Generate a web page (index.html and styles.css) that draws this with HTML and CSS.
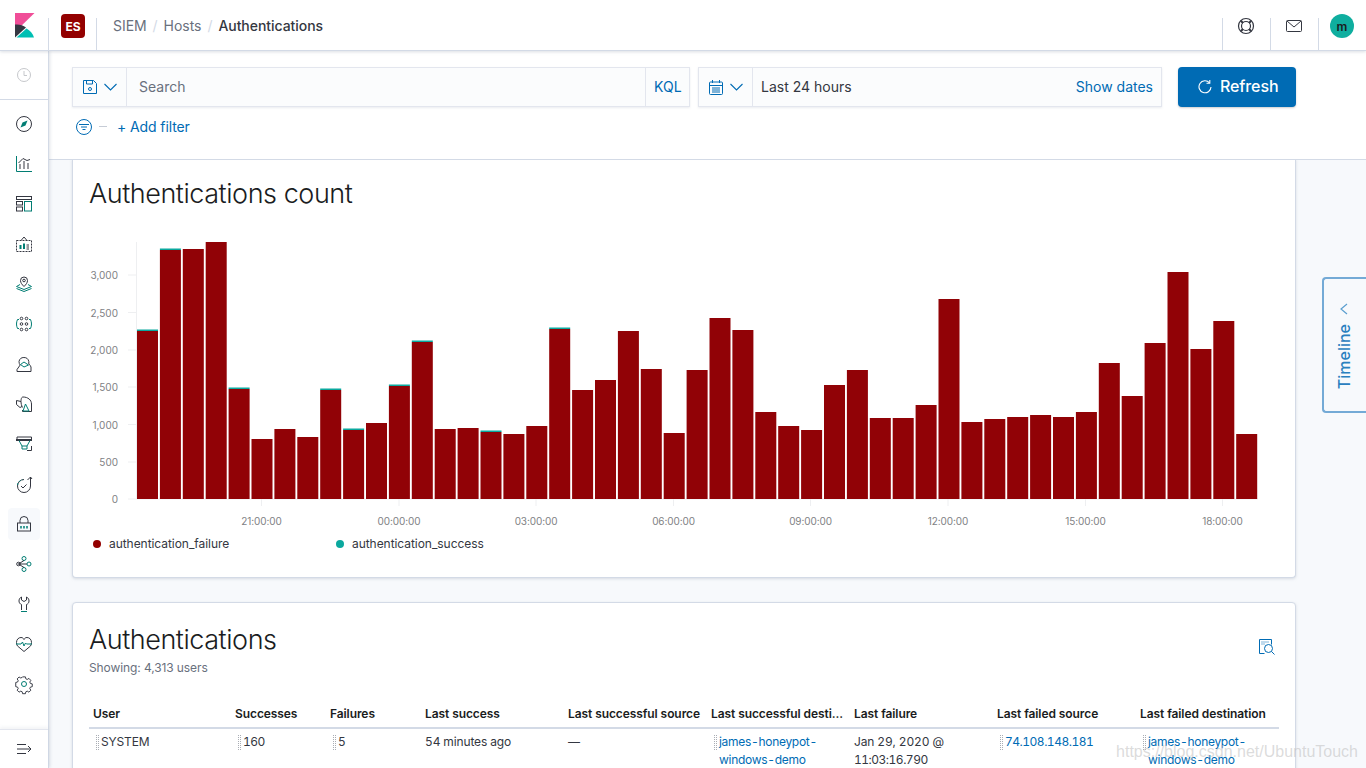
FILE: index.html
```html
<!DOCTYPE html>
<html lang="en">
<head>
<meta charset="utf-8">
<title>Authentications - SIEM</title>
<link rel="stylesheet" href="styles.css">
</head>
<body>
<header class="topbar">
  <div class="logo-cell">
    <svg class="logo" width="20" height="25" viewBox="0 0 20 25"><path fill="#f04e98" d="M0 0h19.500L0 19z"/><path fill="#343741" d="M0 11.500C4 11 8 12 11 14.500L0 24.500z"/><path fill="#00bfb3" d="M1.500 24.500L11.500 15.500C15 17.500 18 20.500 19 24.500z"/></svg>
  </div>
  <div class="space-cell"><span class="badge">ES</span></div>
  <nav class="crumbs">
    <span>SIEM</span><i>/</i><span>Hosts</span><i>/</i><b>Authentications</b>
  </nav>
  <div class="top-actions">
    <div class="top-cell">
      <svg width="18" height="18" viewBox="0 0 18 18" fill="none" stroke="#343741"><circle cx="9" cy="9" r="7.500" stroke-width="1.200"/><circle cx="9" cy="9" r="4.500" stroke-width="1.200"/><path stroke-width="2" d="M3.800 3.800l2.200 2.200M14.200 3.800L12 6M3.800 14.200L6 12M14.200 14.200L12 12"/></svg>
    </div>
    <div class="top-cell">
      <svg width="16" height="12" viewBox="0 0 16 12" fill="none" stroke="#343741" stroke-width="1"><rect x=".5" y=".5" width="15" height="11" rx="1"/><path d="M1 1l7 6 7-6"/></svg>
    </div>
    <div class="top-cell"><span class="avatar">m</span></div>
  </div>
</header>

<div class="shell">
  <aside class="sidenav">
    <div class="recent">
      <svg width="16" height="16" viewBox="0 0 16 16" fill="none" stroke="#c6c8cc"><circle cx="8" cy="8" r="6.500"/><path d="M8 4v4.500h3"/></svg>
    </div>
    <ul class="nav-list">
      <li class="nav-item"><svg class="ni" viewBox="0 0 16 16"><circle class="d" cx="8" cy="8" r="7.500"/><path class="tf" d="M11.500 4.500L9.500 9.500 4.500 11.500 6.500 6.500z"/></svg></li>
      <li class="nav-item"><svg class="ni" viewBox="0 0 16 16"><path class="t" d="M.5 0v15.500H16"/><path class="d" d="M4 8v5M8 5v8M12 7v6"/><path class="d" d="M2.500 7L7 2.500l4 2 3-1"/></svg></li>
      <li class="nav-item"><svg class="ni" viewBox="0 0 16 16"><rect class="d" x=".5" y=".5" width="15" height="3"/><rect class="d" x=".5" y="5.500" width="6" height="3.500"/><rect class="d" x=".5" y="11" width="6" height="4"/><rect class="t" x="8.500" y="5.500" width="7" height="9.500"/></svg></li>
      <li class="nav-item"><svg class="ni" viewBox="0 0 16 16"><path class="d" stroke-dasharray="2 1" d="M.5 4.500h15v11H.5z"/><path class="d" d="M5 4.500L8 1l3 3.500"/><path class="t" stroke-width="2" d="M4.500 9v4M8 7.500V13"/><path class="d" d="M10.500 9h2.500M10.500 11h2.500M10.500 13h2.500"/></svg></li>
      <li class="nav-item"><svg class="ni" viewBox="0 0 16 16"><path class="d" d="M8 10.500C6 8.500 4.500 6.800 4.500 4.500a3.500 3.500 0 0 1 7 0c0 2.300-1.500 4-3.500 6z"/><circle class="d" cx="8" cy="4.500" r="1.300"/><path class="t" d="M4 8.500L.5 10.500 8 13.500l7.500-3L12 8.500M.5 12.500L8 15.500l7.500-3"/></svg></li>
      <li class="nav-item"><svg class="ni" viewBox="0 0 16 16"><circle class="d" cx="5.500" cy="2.500" r="1.300"/><circle class="d" cx="10.500" cy="2.500" r="1.300"/><circle class="d" cx="5.500" cy="8" r="1.300"/><circle class="d" cx="10.500" cy="8" r="1.300"/><circle class="d" cx="5.500" cy="13.500" r="1.300"/><circle class="d" cx="10.500" cy="13.500" r="1.300"/><path class="t" d="M3 3.500H1.500C.8 5 .5 6.500.5 8s.3 3 1 4.500H3M13 3.500h1.500c.7 1.500 1 3 1 4.500s-.3 3-1 4.500H13"/></svg></li>
      <li class="nav-item"><svg class="ni" viewBox="0 0 16 16"><path class="d" d="M1 15.500h14V11a6.500 6.500 0 0 0-2.200-3V5.500a5 5 0 0 0-9.800 0c0 1.500.4 2.600 1.200 3.500L1 13.500z"/><path class="t" d="M4.500 8.500L8 6l4.500 3L8 11z"/></svg></li>
      <li class="nav-item"><svg class="ni" viewBox="0 0 16 16"><path class="d" d="M5 5.500L.5 4.500v4l3.500 3 2-1M15.500 15.500h-9V14M15.500 15.500V8C15.500 4 12 1 7 1 6 1 5 2 5 5.500c0 2 .5 4 1.500 6"/><path class="t" d="M9.500 8l3.500 7h-6z"/></svg></li>
      <li class="nav-item"><svg class="ni" viewBox="0 0 16 16"><path class="d" d="M1 4V1h14.500v3M11 14.500h4.500V10"/><rect class="d" x=".5" y="3.500" width="15" height="1"/><path class="t" d="M3 4.500L6 10h5l3-5.500M6 10v3h5v-3"/></svg></li>
      <li class="nav-item"><svg class="ni" viewBox="0 0 16 16"><path class="d" d="M8 3.500a6.500 6.500 0 1 0 6.500 6.500V1M11.500 4L14.500 1 16 3"/><path class="t" stroke-dasharray="2 1.500" d="M1.500 9a6.500 6.500 0 0 1 5-5.300"/><path class="d" d="M5 10l2 2 3.500-3.500"/></svg></li>
      <li class="nav-item selected"><svg class="ni" viewBox="0 0 16 16"><path class="d" d="M4 7V4.500a4 4 0 0 1 8 0V7"/><rect class="d" x="1.500" y="7" width="13" height="8"/><path class="t" stroke-width="1.500" d="M5 10v2.500M8 10v2.500M11 10v2.500"/></svg></li>
      <li class="nav-item"><svg class="ni" viewBox="0 0 16 16"><circle class="t" cx="8" cy="2.500" r="2"/><circle class="t" cx="13" cy="8" r="2"/><circle class="t" cx="8" cy="13.500" r="2"/><circle class="d" cx="2.500" cy="8" r="1.800"/><path class="d" d="M2.500 8h8.500M2.500 8L8 4.500M2.500 8L8 11.500"/></svg></li>
      <li class="nav-item"><svg class="ni" viewBox="0 0 16 16"><path class="d" d="M5.500 1C3.500 2 3 3.500 3 5c0 1.700 1 3 2.500 3.500V14M10.500 1c2 1 2.500 2.500 2.500 4 0 1.700-1 3-2.500 3.500V14M5.500 1v3L8 5.500 10.500 4V1"/><path class="t" d="M5 15.500h6"/></svg></li>
      <li class="nav-item"><svg class="ni" viewBox="0 0 16 16"><path class="d" d="M1.500 10C.8 9 .5 8 .5 6.500.5 3.500 2.500 1.500 5 1.500c1.500 0 2.300.7 3 2 .7-1.300 1.500-2 3-2 2.500 0 4.500 2 4.500 5 0 1.500-.3 2.500-1 3.500L8 15.500z"/><path class="t" d="M0 8h5l1.500-2 1.500 4 1.500-3 1 1H16"/></svg></li>
      <li class="nav-item"><svg class="ni" viewBox="0 0 16 16"><path class="d" d="M6.500.5h3l.4 2 1.500.7 1.800-1.100 2 2.100-1.100 1.700.6 1.500 2 .5v2.900l-2 .5-.6 1.500 1.100 1.700-2 2.100-1.800-1.100-1.500.7-.4 2h-3l-.4-2-1.500-.7-1.800 1.100-2-2.100 1.100-1.700-.6-1.500-2-.5V6.400l2-.5.6-1.500-1.100-1.700 2-2.100 1.800 1.100 1.500-.7z" transform="translate(.4 .4) scale(.95)"/><circle class="t" cx="8" cy="8" r="2.500"/></svg></li>
    </ul>
    <div class="nav-toggle">
      <svg width="16" height="12" viewBox="0 0 16 12" fill="none" stroke="#343741"><path d="M1 1.500h9M1 6h14M1 10.500h9M12 3l3 3-3 3"/></svg>
    </div>
  </aside>

  <main class="main">
    <section class="querybar">
      <div class="query-row">
        <div class="field search-field">
          <div class="prepend">
            <svg width="14" height="14" viewBox="0 0 14 14" fill="none" stroke="#006bb4"><path d="M.5.500h10l3 3v10H.5z"/><path d="M3.500.500v3.500h6V.500"/><circle cx="7" cy="9" r="1.500"/></svg>
            <svg class="chev" width="13" height="8" viewBox="0 0 13 8" fill="none" stroke="#006bb4" stroke-width="1.100"><path d="M.5 1l6 6 6-6"/></svg>
          </div>
          <span class="placeholder">Search</span>
          <a class="kql">KQL</a>
        </div>
        <div class="field date-field">
          <div class="prepend">
            <svg width="14" height="15" viewBox="0 0 14 15" fill="none" stroke="#006bb4"><rect x=".5" y="2" width="13" height="12.500" rx="1"/><path d="M.5 5.500h13M3.500 0v3M10.500 0v3M3 8h8M3 10h8M3 12h8" /></svg>
            <svg class="chev" width="13" height="8" viewBox="0 0 13 8" fill="none" stroke="#006bb4" stroke-width="1.100"><path d="M.5 1l6 6 6-6"/></svg>
          </div>
          <span class="range">Last 24 hours</span>
          <a class="show-dates">Show dates</a>
        </div>
        <button class="refresh">
          <svg width="14" height="14" viewBox="0 0 14 14" fill="none" stroke="#fff" stroke-width="1.100"><path d="M11.500 2.800A6 6 0 1 0 13 7"/><path d="M11.800 0v3.300H8.500"/></svg>
          <span class="refresh-label">Refresh</span>
        </button>
      </div>
      <div class="filter-row">
        <svg width="16" height="16" viewBox="0 0 16 16" fill="none" stroke="#006bb4"><circle cx="8" cy="8" r="7.500"/><path d="M3 5.500h10M5 8h6M6.500 10.500h3"/></svg>
        <span class="dash"></span>
        <a class="add-filter">+ Add filter</a>
      </div>
    </section>

    <div class="content">
      <section class="panel chart-panel">
        <h2 class="title">Authentications count</h2>
        <svg class="chart" viewBox="72 220 1224 310" width="1224" height="310">
          <g class="grid">
            <path d="M136.500 242V499M128 275h8M128 312.500h8M128 350h8M128 387h8M128 424.500h8M128 462h8M128 499h1130"/>
            <path d="M261.500 499v7M399 499v7M536 499v7M673.500 499v7M810.500 499v7M948 499v7M1085.500 499v7M1222.500 499v7"/>
          </g>
          <g class="fail">
            <rect x="137" y="331" width="21" height="168"/><rect x="159.900" y="250" width="21" height="249"/><rect x="182.800" y="249" width="21" height="250"/><rect x="205.700" y="242" width="21" height="257"/><rect x="228.600" y="389" width="21" height="110"/><rect x="251.500" y="439" width="21" height="60"/><rect x="274.400" y="429" width="21" height="70"/><rect x="297.300" y="437" width="21" height="62"/><rect x="320.200" y="390" width="21" height="109"/><rect x="343.100" y="430" width="21" height="69"/><rect x="366" y="423" width="21" height="76"/><rect x="388.900" y="386" width="21" height="113"/><rect x="411.800" y="342" width="21" height="157"/><rect x="434.700" y="429" width="21" height="70"/><rect x="457.600" y="428" width="21" height="71"/><rect x="480.500" y="432" width="21" height="67"/><rect x="503.400" y="434" width="21" height="65"/><rect x="526.300" y="426" width="21" height="73"/><rect x="549.200" y="329" width="21" height="170"/><rect x="572.100" y="390" width="21" height="109"/><rect x="595" y="380" width="21" height="119"/><rect x="617.900" y="331" width="21" height="168"/><rect x="640.800" y="369" width="21" height="130"/><rect x="663.700" y="433" width="21" height="66"/><rect x="686.600" y="370" width="21" height="129"/><rect x="709.500" y="318" width="21" height="181"/><rect x="732.400" y="330" width="21" height="169"/><rect x="755.300" y="412" width="21" height="87"/><rect x="778.200" y="426" width="21" height="73"/><rect x="801.100" y="430" width="21" height="69"/><rect x="824" y="385" width="21" height="114"/><rect x="846.900" y="370" width="21" height="129"/><rect x="869.800" y="418" width="21" height="81"/><rect x="892.700" y="418" width="21" height="81"/><rect x="915.600" y="405" width="21" height="94"/><rect x="938.500" y="299" width="21" height="200"/><rect x="961.400" y="422" width="21" height="77"/><rect x="984.300" y="419" width="21" height="80"/><rect x="1007.200" y="417" width="21" height="82"/><rect x="1030.100" y="415" width="21" height="84"/><rect x="1053" y="417" width="21" height="82"/><rect x="1075.900" y="412" width="21" height="87"/><rect x="1098.800" y="363" width="21" height="136"/><rect x="1121.700" y="396" width="21" height="103"/><rect x="1144.600" y="343" width="21" height="156"/><rect x="1167.500" y="272" width="21" height="227"/><rect x="1190.400" y="349" width="21" height="150"/><rect x="1213.300" y="321" width="21" height="178"/><rect x="1236.200" y="434" width="21" height="65"/>
          </g>
          <g class="succ">
            <rect x="137" y="329.500" width="21" height="1.500"/><rect x="159.900" y="248.500" width="21" height="1.500"/><rect x="228.600" y="387.500" width="21" height="1.500"/><rect x="320.200" y="388.500" width="21" height="1.500"/><rect x="343.100" y="428.500" width="21" height="1.500"/><rect x="388.900" y="384.500" width="21" height="1.500"/><rect x="411.800" y="340.500" width="21" height="1.500"/><rect x="480.500" y="430.500" width="21" height="1.500"/><rect x="549.200" y="327.500" width="21" height="1.500"/>
          </g>
          <g class="ylabels">
            <text x="118" y="279">3,000</text><text x="118" y="316.500">2,500</text><text x="118" y="354">2,000</text><text x="118" y="391">1,500</text><text x="118" y="428.500">1,000</text><text x="118" y="466">500</text><text x="118" y="503">0</text>
          </g>
          <g class="xlabels">
            <text x="261.500" y="525">21:00:00</text><text x="399" y="525">00:00:00</text><text x="536" y="525">03:00:00</text><text x="673.500" y="525">06:00:00</text><text x="810.500" y="525">09:00:00</text><text x="948" y="525">12:00:00</text><text x="1085.500" y="525">15:00:00</text><text x="1222.500" y="525">18:00:00</text>
          </g>
        </svg>
        <div class="legend">
          <div class="legend-item"><span class="dot dot-fail"></span>authentication_failure</div>
          <div class="legend-item"><span class="dot dot-succ"></span>authentication_success</div>
        </div>
      </section>

      <section class="panel table-panel">
        <div class="table-head">
          <div>
            <h2 class="title">Authentications</h2>
            <p class="subtitle">Showing: 4,313 users</p>
          </div>
          <svg class="inspect" width="16" height="16" viewBox="0 0 16 16" fill="none" stroke="#006bb4"><path d="M5.500 14.500H.5V.5h12v5"/><path stroke-dasharray="1 1" d="M2.500 3h8M2.500 5h4"/><circle cx="9.500" cy="9.500" r="4"/><path d="M12.500 12.500l3 3"/></svg>
        </div>
        <div class="table">
          <div class="thead">
            <span>User</span><span>Successes</span><span>Failures</span><span>Last success</span><span>Last successful source</span><span>Last successful desti...</span><span>Last failure</span><span>Last failed source</span><span>Last failed destination</span>
          </div>
          <div class="trow">
            <span class="cell grip-cell"><i class="grip"></i>SYSTEM</span>
            <span class="cell grip-cell num"><i class="grip"></i>160</span>
            <span class="cell grip-cell"><i class="grip"></i>5</span>
            <span class="cell">54 minutes ago</span>
            <span class="cell">—</span>
            <span class="cell grip-cell"><i class="grip"></i><a>james-honeypot-<br>windows-demo</a></span>
            <span class="cell">Jan 29, 2020 @<br><span class="num">11:03:16.790</span></span>
            <span class="cell grip-cell num"><i class="grip"></i><a>74.108.148.181</a></span>
            <span class="cell grip-cell"><i class="grip"></i><a>james-honeypot-<br>windows-demo</a></span>
          </div>
        </div>
      </section>
    </div>

    <button class="timeline">
      <svg width="8" height="12" viewBox="0 0 8 12" fill="none" stroke="#5b9fd0" stroke-width="1.200"><path d="M7 1L1 6l6 5"/></svg>
      <span>Timeline</span>
    </button>
    <div class="watermark">https://blog.csdn.net/UbuntuTouch</div>
  </main>
</div>
</body>
</html>
```
FILE: styles.css
```css
* { box-sizing: border-box; }
html, body { margin: 0; height: 100%; overflow: hidden; }
body { font-family: Inter, "Liberation Sans", sans-serif; font-size: 14px; color: #343741; background: #fff; }
a { color: #006bb4; }

.topbar { height: 51px; display: flex; align-items: stretch; background: #fff; border-bottom: 1px solid #d3dae6; box-shadow: 0 1px 3px rgba(152,162,179,.35); position: relative; z-index: 3; }
.logo-cell { width: 48px; display: flex; align-items: flex-start; padding: 13px 0 0 15px; }
.space-cell { width: 49px; margin-top: 18px; border-left: 1px solid #d3dae6; border-right: 1px solid #d3dae6; position: relative; }
.badge { position: absolute; left: 12px; top: -4px; width: 24px; height: 24px; border-radius: 4px; background: #930000; color: #fff; font-size: 12px; font-weight: 700; display: flex; align-items: center; justify-content: center; }
.crumbs { display: flex; align-items: center; padding-left: 16px; padding-top: 1px; flex: 1; color: #69707d; white-space: nowrap; letter-spacing: -.05px; }
.crumbs i { font-style: normal; color: #d3dae6; margin: 0 6px; }
.crumbs b { font-weight: 500; color: #343741; }
.top-actions { display: flex; }
.top-cell { width: 48px; margin-top: 18px; border-left: 1px solid #d3dae6; position: relative; }
.top-cell svg { position: absolute; left: calc(50% - 1px); top: 8px; transform: translate(-50%, -50%); }
.avatar { position: absolute; left: 11px; top: -4px; width: 24px; height: 24px; border-radius: 50%; background: #0fae9f; color: #1a1c21; font-size: 12px; font-weight: 600; display: flex; align-items: center; justify-content: center; }

.shell { display: flex; height: 717px; }
.sidenav { width: 49px; margin-right: -1px; flex: none; background: #fff; border-right: 1px solid #d3dae6; box-shadow: 1px 0 3px rgba(152,162,179,.3); display: flex; flex-direction: column; position: relative; z-index: 2; }
.recent { height: 49px; flex: none; display: flex; align-items: center; justify-content: center; border-bottom: 1px solid #d3dae6; padding-bottom: 1px; }
.nav-list { list-style: none; margin: 4px 0 0; padding: 0; display: flex; flex-direction: column; }
.nav-item { width: 48px; height: 40px; display: flex; align-items: center; justify-content: center; position: relative; }
.nav-item.selected::before { content: ""; position: absolute; inset: 4px 8px; background: #f7f9fc; border-radius: 4px; }
.ni { width: 16px; height: 16px; position: relative; fill: none; stroke-width: 1; overflow: visible; }
.ni .d { stroke: #343741; fill: none; }
.ni .t { stroke: #017d73; fill: none; }
.ni .tf { fill: #017d73; }
.nav-toggle { margin-top: auto; height: 39px; flex: none; border-top: 1px solid #e3e6ee; display: flex; align-items: center; justify-content: center; box-shadow: 0 -2px 3px rgba(152,162,179,.12); }

.main { flex: 1; min-width: 0; background: #f7f9fc; display: flex; flex-direction: column; position: relative; }
.querybar { height: 109px; flex: none; background: #fff; border-bottom: 1px solid #d3dae6; padding: 16px 70px 0 24px; }
.query-row { display: flex; gap: 8px; height: 40px; }
.field { display: flex; align-items: center; height: 40px; background: #fbfcfd; border: 1px solid #e3e6ee; box-shadow: 0 1px 2px rgba(152,162,179,.2); }
.search-field { width: 618px; flex: none; }
.date-field { width: 464px; flex: none; }
.prepend { width: 54px; height: 100%; flex: none; display: flex; align-items: center; gap: 7px; padding-left: 10px; border-right: 1px solid #e3e6ee; }
.placeholder { flex: 1; padding: 0 0 2px 12px; color: #69707d; }
.kql { height: 100%; width: 44px; flex: none; border-left: 1px solid #e3e6ee; display: flex; align-items: center; padding: 0 0 2px 8px; color: #006bb4; }
.range { flex: 1; padding: 0 0 2px 8px; }
.show-dates { padding: 0 8px 2px 0; color: #006bb4; }
.refresh { width: 118px; margin-left: 8px; height: 40px; flex: none; border: 0; border-radius: 4px; background: #006bb4; color: #fff; font: 500 16px Inter, "Liberation Sans", sans-serif; display: flex; align-items: center; gap: 8px; padding: 0 0 0 20px; box-shadow: 0 1px 2px rgba(52,55,65,.25); letter-spacing: -.1px; }
.refresh-label { padding-bottom: 2px; }
.filter-row { display: flex; align-items: center; height: 24px; margin-top: 8px; padding-left: 4px; }
.dash { width: 8px; height: 1px; background: #c6ccd6; margin: 0 10px 2px 7px; }
.add-filter { color: #006bb4; padding-bottom: 2px; letter-spacing: -.1px; }

.content { flex: 1; min-height: 0; overflow: hidden; padding: 0 70px 0 24px; display: flex; flex-direction: column; gap: 24px; }
.panel { background: #fff; border: 1px solid #d3dae6; border-radius: 4px; box-shadow: 0 1px 3px rgba(152,162,179,.35); padding: 0 16px; flex: none; }
.chart-panel { margin-top: -1px; border-top: 0; border-top-left-radius: 0; border-top-right-radius: 0; padding-top: 16px; height: 419px; }
.title { margin: 0; font-size: 27px; line-height: 38px; font-weight: 300; color: #1a1c21; letter-spacing: -.45px; }
.chart { display: block; margin: 7px 0 0 -17px; }
.grid path { stroke: #eeeff1; fill: none; }
.fail rect { fill: #910206; }
.succ rect { fill: #0aa89e; }
.ylabels text { font-size: 10px; fill: #808184; text-anchor: end; }
.xlabels text { font-size: 10px; fill: #808184; text-anchor: middle; letter-spacing: -.1px; }
.legend { display: flex; margin: 5px 0 0 4px; }
.legend-item { width: 243px; display: flex; align-items: center; gap: 8px; font-size: 12px; line-height: 18px; color: #343741; letter-spacing: -.05px; }
.dot { width: 8px; height: 8px; border-radius: 50%; }
.dot-fail { background: #930000; }
.dot-succ { background: #0aa89e; }

.table-panel { height: 300px; padding-top: 18px; }
.table-head { display: flex; justify-content: space-between; align-items: flex-start; }
.subtitle { margin: 0; font-size: 12px; line-height: 18px; color: #69707d; letter-spacing: -.1px; }
.inspect { margin: 18px 4px 0 0; }
.table { margin-top: 28px; width: 1190px; }
.thead, .trow { display: grid; grid-template-columns: 142px 95px 95px 143px 143px 143px 143px 143px 143px; padding-left: 4px; font-size: 12px; line-height: 18px; }
.thead { font-weight: 600; color: #1a1c21; border-bottom: 2px solid #d3dae6; height: 24px; white-space: nowrap; letter-spacing: -.08px; }
.trow { padding-top: 4px; font-variant-numeric: tabular-nums; letter-spacing: -.14px; }
.cell { display: block; position: relative; }
.cell a { color: #006bb4; letter-spacing: -.3px; }
.cell.num a, .num { letter-spacing: -.5px; }
.grip-cell { padding-left: 8px; }
.grip { position: absolute; left: 3px; top: 2px; width: 3px; height: 15px; border-left: 1px dotted #a9adb4; border-right: 1px dotted #a9adb4; }

.timeline { position: absolute; right: 0; top: 226px; width: 44px; height: 136px; background: #f7f9fc; border: 2px solid #74aad6; border-right: 0; border-radius: 4px 0 0 4px; font: 500 16px Inter, "Liberation Sans", sans-serif; display: flex; flex-direction: column; align-items: center; padding: 24px 2px 0 0; gap: 9px; }
.timeline span { writing-mode: vertical-rl; transform: rotate(180deg); color: #2a80bf; }
.watermark { position: absolute; right: 8px; bottom: 7px; font: 16px "Liberation Sans", sans-serif; color: rgba(190,190,190,.55); white-space: nowrap; }
```
